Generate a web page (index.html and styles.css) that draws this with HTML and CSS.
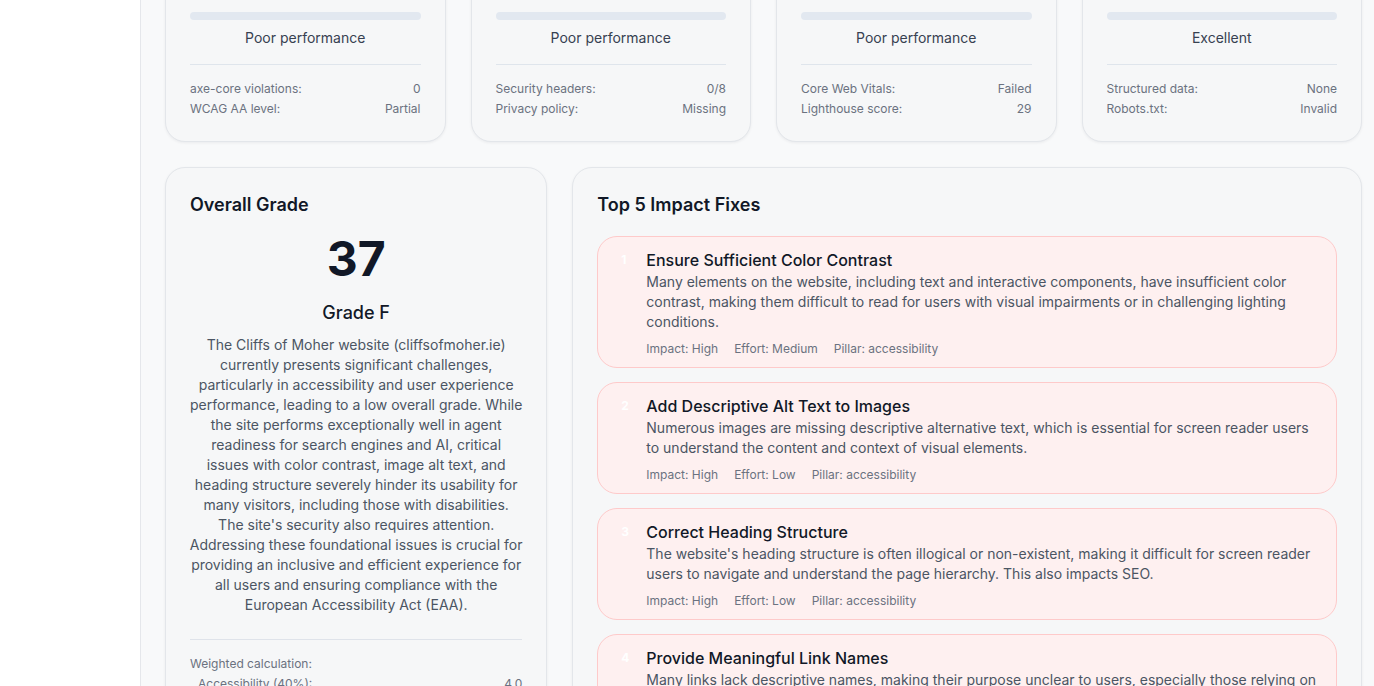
FILE: index.html
```html
<!DOCTYPE html>
<html lang="en">
<head>
<meta charset="utf-8">
<title>Report</title>
<link rel="stylesheet" href="styles.css">
</head>
<body>
<div class="app">
  <aside class="sidebar"></aside>
  <main class="main">
    <section class="pillars">
      <div class="pillar">
        <div class="pillar-head"><div class="pillar-title">Accessibility</div><div class="pillar-score">25</div></div>
        <div class="bar"></div>
        <div class="pillar-status">Poor performance</div>
        <div class="pillar-rows">
          <div class="row"><span>axe-core violations:</span><span>0</span></div>
          <div class="row"><span>WCAG AA level:</span><span>Partial</span></div>
        </div>
      </div>
      <div class="pillar">
        <div class="pillar-head"><div class="pillar-title">Security</div><div class="pillar-score">30</div></div>
        <div class="bar"></div>
        <div class="pillar-status">Poor performance</div>
        <div class="pillar-rows">
          <div class="row"><span>Security headers:</span><span>0/8</span></div>
          <div class="row"><span>Privacy policy:</span><span>Missing</span></div>
        </div>
      </div>
      <div class="pillar">
        <div class="pillar-head"><div class="pillar-title">User Experience</div><div class="pillar-score">29</div></div>
        <div class="bar"></div>
        <div class="pillar-status">Poor performance</div>
        <div class="pillar-rows">
          <div class="row"><span>Core Web Vitals:</span><span>Failed</span></div>
          <div class="row"><span>Lighthouse score:</span><span>29</span></div>
        </div>
      </div>
      <div class="pillar">
        <div class="pillar-head"><div class="pillar-title">Agent Readiness</div><div class="pillar-score">95</div></div>
        <div class="bar"></div>
        <div class="pillar-status">Excellent</div>
        <div class="pillar-rows">
          <div class="row"><span>Structured data:</span><span>None</span></div>
          <div class="row"><span>Robots.txt:</span><span>Invalid</span></div>
        </div>
      </div>
    </section>

    <section class="lower">
      <div class="card grade-card">
        <h2 class="card-title">Overall Grade</h2>
        <div class="grade-score">37</div>
        <div class="grade-letter">Grade F</div>
        <p class="grade-text">The Cliffs of Moher website (cliffsofmoher.ie) currently presents significant challenges, particularly in accessibility and user experience performance, leading to a low overall grade. While the site performs exceptionally well in agent readiness for search engines and AI, critical issues with color contrast, image alt text, and heading structure severely hinder its usability for many visitors, including those with disabilities. The site's security also requires attention. Addressing these foundational issues is crucial for providing an inclusive and efficient experience for all users and ensuring compliance with the European Accessibility Act (EAA).</p>
        <div class="calc">
          <div class="calc-label">Weighted calculation:</div>
          <div class="calc-row"><span>Accessibility (40%):</span><span>4.0</span></div>
          <div class="calc-row"><span>Security (20%):</span><span>6.0</span></div>
          <div class="calc-row"><span>User Experience (20%):</span><span>5.8</span></div>
          <div class="calc-row"><span>Agent Readiness (20%):</span><span>19.0</span></div>
        </div>
      </div>

      <div class="card fixes-card">
        <h2 class="card-title">Top 5 Impact Fixes</h2>
        <div class="fixes">
          <div class="fix">
            <div class="fix-num">1</div>
            <div class="fix-body">
              <div class="fix-title">Ensure Sufficient Color Contrast</div>
              <p class="fix-desc">Many elements on the website, including text and interactive components, have insufficient color contrast, making them difficult to read for users with visual impairments or in challenging lighting conditions.</p>
              <div class="fix-meta"><span>Impact: High</span><span>Effort: Medium</span><span>Pillar: accessibility</span></div>
            </div>
          </div>
          <div class="fix">
            <div class="fix-num">2</div>
            <div class="fix-body">
              <div class="fix-title">Add Descriptive Alt Text to Images</div>
              <p class="fix-desc">Numerous images are missing descriptive alternative text, which is essential for screen reader users to understand the content and context of visual elements.</p>
              <div class="fix-meta"><span>Impact: High</span><span>Effort: Low</span><span>Pillar: accessibility</span></div>
            </div>
          </div>
          <div class="fix">
            <div class="fix-num">3</div>
            <div class="fix-body">
              <div class="fix-title">Correct Heading Structure</div>
              <p class="fix-desc">The website's heading structure is often illogical or non-existent, making it difficult for screen reader users to navigate and understand the page hierarchy. This also impacts SEO.</p>
              <div class="fix-meta"><span>Impact: High</span><span>Effort: Low</span><span>Pillar: accessibility</span></div>
            </div>
          </div>
          <div class="fix">
            <div class="fix-num">4</div>
            <div class="fix-body">
              <div class="fix-title">Provide Meaningful Link Names</div>
              <p class="fix-desc">Many links lack descriptive names, making their purpose unclear to users, especially those relying on assistive technologies such as screen readers.</p>
              <div class="fix-meta"><span>Impact: High</span><span>Effort: Low</span><span>Pillar: accessibility</span></div>
            </div>
          </div>
        </div>
      </div>
    </section>
  </main>
</div>
</body>
</html>
```

FILE: styles.css
```css
* { box-sizing: border-box; }
html, body { margin: 0; padding: 0; }
body {
  font-family: Inter, "Noto Sans", "Liberation Sans", sans-serif;
  background: #f8f9fa;
  color: #111827;
  overflow: hidden;
}
.app { display: flex; min-height: 100vh; }
.sidebar {
  width: 141px;
  flex: 0 0 141px;
  background: #ffffff;
  border-right: 1px solid #e5e7eb;
}
.main {
  flex: 1;
  padding: 24px 12px 24px 24px;
  margin-top: -117px;
}
.pillars {
  display: grid;
  grid-template-columns: repeat(4, 1fr);
  gap: 25px;
}
.pillar {
  background: #f6f7f8;
  border: 1px solid #e3e6ea;
  border-radius: 20px;
  padding: 24px 24px 24px 24px;
  box-shadow: 0 1px 3px rgba(15, 23, 42, 0.06);
}
.pillar-head { height: 68px; margin-bottom: 12px; }
.pillar-title { font-size: 16px; line-height: 24px; font-weight: 600; }
.pillar-score { font-size: 30px; line-height: 36px; font-weight: 700; margin-top: 8px; }
.bar { height: 8px; border-radius: 4px; background: #e2e8f0; }
.pillar-status {
  margin-top: 6px;
  text-align: center;
  font-size: 14px;
  line-height: 24px;
  color: #374151;
}
.pillar-rows {
  margin-top: 14px;
  border-top: 1px solid #dfe5ec;
  padding-top: 16px;
  display: flex;
  flex-direction: column;
  gap: 4px;
}
.row {
  display: flex;
  justify-content: space-between;
  font-size: 12px;
  line-height: 16px;
  color: #6b7280;
}

.lower {
  margin-top: 25px;
  display: grid;
  grid-template-columns: 382fr 789fr;
  gap: 25px;
  align-items: start;
}
.card {
  background: #f6f7f8;
  border: 1px solid #e3e6ea;
  border-radius: 20px;
  padding: 23px 24px 24px 24px;
  box-shadow: 0 1px 3px rgba(15, 23, 42, 0.06);
}
.card-title {
  margin: 0;
  font-size: 18px;
  line-height: 28px;
  font-weight: 600;
  color: #111827;
}
.grade-score {
  margin-top: 16px;
  text-align: center;
  font-size: 48px;
  line-height: 48px;
  font-weight: 700;
  color: #111827;
}
.grade-letter {
  margin-top: 16px;
  text-align: center;
  font-size: 18px;
  line-height: 28px;
  font-weight: 500;
  color: #111827;
}
.grade-text {
  margin: 8px -1px 0;
  text-align: center;
  font-size: 14px;
  line-height: 20px;
  color: #4b5563;
}
.calc {
  margin-top: 24px;
  border-top: 1px solid #dfe3ea;
  padding-top: 14px;
  font-size: 12px;
  line-height: 20px;
  color: #6b7280;
}
.calc-row {
  display: flex;
  justify-content: space-between;
  padding-left: 8px;
}

.fixes {
  margin-top: 17px;
  display: flex;
  flex-direction: column;
  gap: 14px;
}
.fix {
  display: flex;
  gap: 12px;
  background: #fef0f0;
  border: 1px solid #fecaca;
  border-radius: 20px;
  padding: 11px 16px 10px 23px;
}
.fix-num {
  flex: 0 0 13px;
  font-size: 12px;
  line-height: 24px;
  font-weight: 700;
  color: #ffffff;
}
.fix-body { flex: 1; }
.fix-title {
  font-size: 16px;
  line-height: 24px;
  font-weight: 500;
  color: #111827;
}
.fix-desc {
  margin: 0;
  font-size: 14px;
  line-height: 20px;
  color: #4b5563;
}
.fix-meta {
  margin-top: 9px;
  display: flex;
  gap: 16px;
  font-size: 12px;
  line-height: 16px;
  color: #6b7280;
}
```
